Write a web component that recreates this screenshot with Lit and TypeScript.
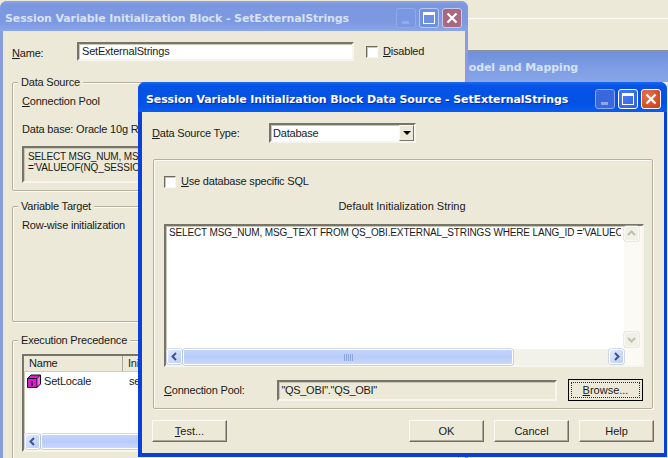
import { LitElement, html, css, svg } from "lit";
import { customElement } from "lit/decorators.js";

const closeIcon = svg`<svg width="12" height="12" viewBox="0 0 12 12"><path d="M1.500 1.500l9 9M10.500 1.500l-9 9" stroke="#fff" stroke-width="2.200" fill="none"/></svg>`;
const chevron = (d: string) => svg`<svg width="9" height="9" viewBox="0 0 9 9"><path d="${d}" stroke="currentColor" stroke-width="2" fill="none"/></svg>`;
const LEFT = "M6 1L2.500 4.500 6 8";
const RIGHT = "M3 1l3.500 3.500L3 8";
const UP = "M1 6l3.500-3.500L8 6";
const DOWN = "M1 3l3.500 3.500L8 3";

@customElement("app-root")
export class AppRoot extends LitElement {
  static styles = css`
    :host { display: block; position: relative; width: 668px; height: 458px; overflow: hidden; background: #ece9d8;
      font: 11px/13px "Liberation Sans", Arial, sans-serif; letter-spacing: -0.2px; color: #1a1a1a; }
    * { box-sizing: border-box; }
    u { text-decoration: underline; }

    .app { position: absolute; inset: 0; display: flex; flex-direction: column; }
    .app-line { height: 1px; margin-top: 18px; background: #fbfaf5; }
    .app-head { margin-top: 31px; height: 32px; border-top: 2px solid #8f9099; display: flex; align-items: center;
      padding-left: 400px; background: linear-gradient(#6f8fdc, #7d9ce4 50%, #88a5e8);
      font: bold 11px "DejaVu Sans", sans-serif; letter-spacing: -0.1px; color: #d5e2f7; white-space: nowrap; }

    .win { position: absolute; display: flex; flex-direction: column; overflow: hidden; border-radius: 7px 7px 0 0; }
    .back { left: 0; top: 1px; width: 468px; height: 470px; background: #8a9ce0; padding: 0 3px; }
    .front { left: 138px; top: 82px; width: 529px; height: 375px; background: #0a3fd8; padding: 0 3px 4px 4px; }

    .title { flex: none; height: 30px; display: flex; align-items: center; white-space: nowrap;
      font: bold 11px "DejaVu Sans", sans-serif; letter-spacing: -0.12px; }
    .back .title { margin: 0 -3px; padding: 0 6px 0 5px; color: #d6e2f6;
      background: linear-gradient(#8ea5e6, #7b97e0 12%, #7c99e2 70%, #8aa5e8); }
    .front .title { margin: 0 -3px 0 -4px; padding: 0 6px 0 8px; color: #fff; text-shadow: 1px 1px 0 #0a2a9c;
      background: linear-gradient(#1a6af0, #0653e6 12%, #0352e4 70%, #0a5cf0); }
    .title-text { flex: 1; padding-top: 5px; }
    .tbtns { display: flex; gap: 3px; margin-top: 3px; }
    .tb { width: 20px; height: 20px; border-radius: 3px; border: 1px solid #fff; display: flex; position: relative; align-items: center; justify-content: center; }
    .front .tb { background: radial-gradient(circle at 30% 30%, #4a7df0, #2a5ee0); }
    .front .tb.min { background: #3a68dc; border-color: #8aa8ee; }
    .front .tb.close { background: radial-gradient(circle at 30% 30%, #e8714c, #c83c14); }
    .back .tb { background: #6f8fe0; border-color: #b8c8f0; }
    .back .tb.min { background: #7a97e2; border-color: #92a9e8; }
    .back .tb.close { background: #a86880; border-color: #c8cce8; }
    .min-mark { position: absolute; left: 5px; bottom: 3px; width: 7px; height: 3px; background: #8fa6e8; }
    .back .min-mark { background: #94a9e6; }
    .max-mark { width: 12px; height: 12px; border: 1px solid #fff; border-top-width: 3px; }

    .client { flex: 1; background: #ece9d8; display: flex; flex-direction: column; min-height: 0; }
    .sunken { border: 2px solid; border-color: #77746a #f6f5ee #f6f5ee #77746a; box-shadow: inset 1px 1px 0 #c9c6b6; }
    .field { background: #fff; }
    .check { flex: none; width: 12px; height: 12px; background: #fff; border: 1px solid; border-color: #6d6b60 #f8f7f0 #f8f7f0 #6d6b60; box-shadow: inset 1px 1px 0 #c8c6b8; }
    .row { display: flex; align-items: center; }
    .group { position: relative; border: 1px solid #b3b0a0; box-shadow: inset 1px 1px 0 #fbfaf5, 1px 1px 0 #fbfaf5; border-radius: 2px; }
    .legend { position: absolute; left: 5px; top: -7px; padding: 0 3px; background: #ece9d8; white-space: nowrap; }

    .back .client { padding: 11px 0 0 9px; }
    .name-row { height: 19px; }
    .name-label { width: 65px; padding-top: 3px; }
    .name-input { width: 277px; height: 19px; padding-left: 3px; line-height: 14px; }
    .back .check { margin-left: 12px; margin-right: 5px; }
    .b-groups { margin-top: 21px; display: flex; flex-direction: column; width: 447px; }
    .ds { height: 109px; padding: 12px 9px 0 9px; }
    .ds p, .vt p { margin: 0; }
    .ds .db { margin-top: 15px; }
    .sql-mini { margin-top: 10px; height: 37px; padding: 3px 4px; font-size: 10px; letter-spacing: -0.15px; line-height: 11px; white-space: pre; overflow: hidden; background: #ece9d8; width: 420px; }
    .vt { margin-top: 15px; height: 116px; padding: 12px 9px 0 9px; }
    .ep { margin-top: 18px; height: 130px; padding: 13px 9px 0 9px; }
    .list { height: 98px; width: 420px; display: flex; flex-direction: column; background: #fff; }
    .list-head { flex: none; display: grid; grid-template-columns: 99px 1fr; height: 16px; background: #ece9d8; border-bottom: 1px solid #d0cdbc; }
    .list-head span { padding-left: 5px; border-right: 1px solid #aca899; line-height: 15px; }
    .list-row { flex: 1; display: grid; grid-template-columns: 99px 1fr; padding-top: 2px; }
    .list-row .nm { display: flex; align-items: flex-start; gap: 3px; padding-left: 3px; line-height: 14px; }
    .list-row .in { padding-left: 6px; line-height: 14px; }

    .hbar { flex: none; height: 16px; display: flex; background: #f3f2ea; padding: 0 1px 1px; }
    .sbtn { flex: none; width: 15px; height: 15px; display: flex; align-items: center; justify-content: center; color: #3a5590;
      background: linear-gradient(135deg, #e2eafd, #bccdf8); border: 1px solid #fff; border-radius: 2px; box-shadow: 0 0 0 0.5px #a8b8dc; }
    .sbtn.off { color: #c2c0b0; background: #f1f0e6; border-color: #fafaf5; box-shadow: 0 0 0 0.5px #d9d7c8; }
    .thumb { background: linear-gradient(#c3d4fb, #b8ccfa 50%, #c9d8fb); border: 1px solid #fff; border-radius: 2px; box-shadow: 0 0 0 0.5px #9fb2dc; margin-left: 1px;
      display: flex; align-items: center; justify-content: center; }
    .grip { width: 9px; height: 7px; background: repeating-linear-gradient(90deg, #8ca4dc 0 1px, transparent 1px 2px); }
    .track { flex: 1; }

    .front .client { padding: 11px 10px 10px 10px; }
    .ds-row { height: 20px; }
    .ds-label { width: 117px; padding-top: 1px; }
    .select { width: 147px; height: 20px; display: flex; align-items: center; padding-left: 2px; }
    .select span { flex: 1; padding-top: 1px; }
    .sel-btn { width: 15px; height: 16px; background: #ece9d8; border: 1px solid; border-color: #fbfaf5 #77746a #77746a #fbfaf5; display: flex; align-items: center; justify-content: center; }
    .tri { width: 0; height: 0; border: 4px solid transparent; border-top: 4px solid #000; border-bottom: 0; }
    .f-group { flex: none; margin-top: 16px; margin-left: 1px; width: 500px; height: 250px; padding: 15px 9px 0 10px; display: flex; flex-direction: column; }
    .use-row { height: 13px; gap: 5px; }
    .init-label { text-align: center; margin-top: 12px; height: 13px; padding-right: 3px; letter-spacing: 0; }
    .sql { margin-top: 11px; height: 143px; width: 480px; display: grid; grid-template-columns: minmax(0, 1fr) 18px; grid-template-rows: minmax(0, 1fr) 16px; background: #fff; }
    .sql-text { margin: 0 3px 0 3px; font-size: 10px; letter-spacing: -0.15px; line-height: 13px; white-space: nowrap; overflow: hidden; }
    .vbar { grid-row: 1 / 3; grid-column: 2; display: flex; flex-direction: column; justify-content: space-between; padding: 0 3px 18px 0; background: #fbfaf5; }
    .sql .hbar { padding: 0 0 0 1px; }
    .cp-row { margin-top: 12px; height: 22px; }
    .cp-label { width: 114px; padding-top: 1px; }
    .cp-field { width: 281px; height: 21px; padding-left: 2px; background: #ece9d8; display: flex; align-items: center; letter-spacing: -0.3px; }
    .btn { flex: none; width: 75px; height: 22px; display: flex; align-items: center; justify-content: center; background: #ece9d8;
      border: 1px solid; border-color: #fbfaf5 #6f6d62 #6f6d62 #fbfaf5; box-shadow: inset -1px -1px 0 #aca899; letter-spacing: 0; }
    .browse { margin-left: 11px; border: 1px solid #000; box-shadow: none; padding: 2px; }
    .browse span { flex: 1; height: 100%; border: 1px dotted #333; text-align: center; line-height: 15px; }
    .actions { margin-top: 11px; display: flex; gap: 10px; width: 502px; }
    .actions .spacer { flex: 1; }
  `;

  private tbtns() {
    return html`<div class="tbtns">
      <div class="tb min"><div class="min-mark"></div></div>
      <div class="tb"><div class="max-mark"></div></div>
      <div class="tb close">${closeIcon}</div>
    </div>`;
  }

  private hbar(thumb: number) {
    return html`<div class="hbar">
      <div class="sbtn">${chevron(LEFT)}</div>
      <div class="thumb" style="width:${thumb}px"><div class="grip"></div></div>
      <div class="track"></div>
      <div class="sbtn">${chevron(RIGHT)}</div>
    </div>`;
  }

  private cube() {
    return svg`<svg width="14" height="14" viewBox="0 0 14 14" style="flex:none">
      <path d="M.5 4.500L4 1h9.500v9L10 13.500H.5z" fill="#d81ec8" stroke="#1a0a20"/>
      <path d="M.5 4.500H10V13.500M10 4.500L13.500 1" fill="none" stroke="#1a0a20"/>
      <path d="M10.500 4.500L13 2v7.500l-2.500 2.500z" fill="#f070e8"/>
      <rect x="4" y="7" width="2" height="1.500" fill="#2a0a30"/><rect x="4" y="9.500" width="2" height="2.500" fill="#2a0a30"/>
    </svg>`;
  }

  render() {
    return html`
      <div class="app">
        <div class="app-line"></div>
        <div class="app-head">Business Model and Mapping</div>
      </div>

      <div class="win back">
        <div class="title"><span class="title-text">Session Variable Initialization Block - SetExternalStrings</span>${this.tbtns()}</div>
        <div class="client">
          <div class="row name-row">
            <div class="name-label"><u>N</u>ame:</div>
            <div class="sunken field name-input">SetExternalStrings</div>
            <div class="check"></div>
            <div><u>D</u>isabled</div>
          </div>
          <div class="b-groups">
            <div class="group ds">
              <div class="legend">Data Source</div>
              <p><u>C</u>onnection Pool</p>
              <p class="db">Data base: Oracle 10g R1</p>
              <div class="sunken sql-mini">SELECT MSG_NUM, MSG_TEXT FROM QS_OBI.EXTERNAL_STRINGS
='VALUEOF(NQ_SESSION.LOCALE)'</div>
            </div>
            <div class="group vt">
              <div class="legend">Variable Target</div>
              <p>Row-wise initialization</p>
            </div>
            <div class="group ep">
              <div class="legend">Execution Precedence</div>
              <div class="sunken list">
                <div class="list-head"><span>Name</span><span>Initialization</span></div>
                <div class="list-row">
                  <div class="nm">${this.cube()}<span>SetLocale</span></div>
                  <div class="in">select</div>
                </div>
                ${this.hbar(300)}
              </div>
            </div>
          </div>
        </div>
      </div>

      <div class="win front">
        <div class="title"><span class="title-text">Session Variable Initialization Block Data Source - SetExternalStrings</span>${this.tbtns()}</div>
        <div class="client">
          <div class="row ds-row">
            <div class="ds-label"><u>D</u>ata Source Type:</div>
            <div class="sunken field select"><span>Database</span><div class="sel-btn"><div class="tri"></div></div></div>
          </div>
          <div class="group f-group">
            <div class="row use-row"><div class="check"></div><div><u>U</u>se database specific SQL</div></div>
            <div class="init-label">Default Initialization String</div>
            <div class="sunken sql">
              <div class="sql-text">SELECT MSG_NUM, MSG_TEXT FROM QS_OBI.EXTERNAL_STRINGS WHERE LANG_ID ='VALUEOF(NQ_SESSION.LOCALE)'</div>
              <div class="vbar">
                <div class="sbtn off">${chevron(UP)}</div>
                <div class="sbtn off">${chevron(DOWN)}</div>
              </div>
              ${this.hbar(330)}
            </div>
            <div class="row cp-row">
              <div class="cp-label"><u>C</u>onnection Pool:</div>
              <div class="sunken cp-field">"QS_OBI"."QS_OBI"</div>
              <div class="btn browse"><span><u>B</u>rowse...</span></div>
            </div>
          </div>
          <div class="actions">
            <div class="btn"><span><u>T</u>est...</span></div>
            <div class="spacer"></div>
            <div class="btn">OK</div>
            <div class="btn">Cancel</div>
            <div class="btn">Help</div>
          </div>
        </div>
      </div>
    `;
  }
}
